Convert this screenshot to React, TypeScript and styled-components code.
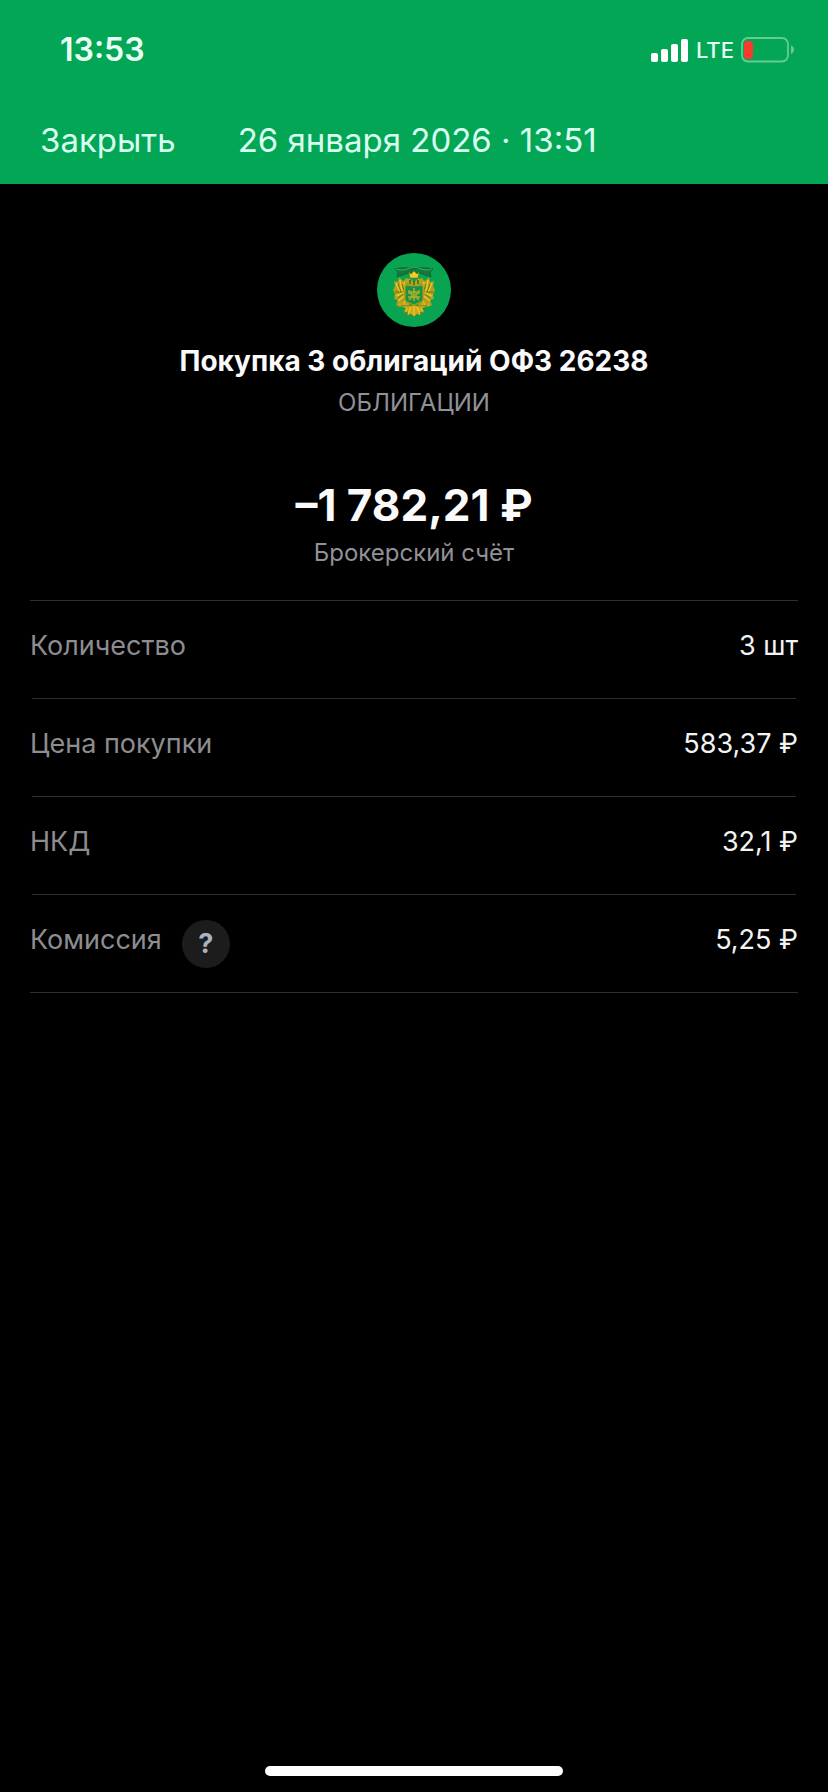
import React from 'react';
import styled, { createGlobalStyle } from 'styled-components';

const GlobalStyle = createGlobalStyle`
  *, *::before, *::after { box-sizing: border-box; }
  body {
    margin: 0;
    background: #000;
    color: #fafafb;
    font-family: Inter, 'Liberation Sans', sans-serif;
  }
`;

const Page = styled.div`
  display: flex;
  flex-direction: column;
  min-height: 100vh;
  background: #000;
`;

const Header = styled.header`
  background: #03a654;
  color: #d9fff0;
  padding: 32px 34px 22px 40px;
`;

const StatusBar = styled.div`
  display: flex;
  align-items: center;
  justify-content: space-between;
  height: 36px;
  padding-left: 20px;
`;

const Clock = styled.time`
  font-size: 32px;
  line-height: 36px;
  font-weight: 600;
  color: #eafff6;
`;

const Indicators = styled.div`
  display: flex;
  align-items: center;
  gap: 7px;
`;

const Network = styled.span`
  font-size: 22px;
  line-height: 36px;
  font-weight: 500;
  color: #e2fff2;
`;

const NavBar = styled.div`
  display: flex;
  align-items: center;
  gap: 62px;
  margin-top: 50px;
  font-size: 33px;
  line-height: 44px;
`;

const CloseButton = styled.button`
  border: 0;
  padding: 0;
  background: none;
  color: inherit;
  font: inherit;
  cursor: pointer;
`;

const NavTitle = styled.h1`
  margin: 0;
  font: inherit;
`;

const Content = styled.main`
  flex: 1;
  padding: 69px 30px 0;
`;

const Summary = styled.section`
  display: flex;
  flex-direction: column;
  align-items: center;
  text-align: center;
`;

const Title = styled.h2`
  margin: 16px 0 0;
  font-size: 28px;
  line-height: 36px;
  font-weight: 700;
`;

const Caption = styled.p<{ $gap: number }>`
  margin: ${({ $gap }) => $gap}px 0 0;
  font-size: 24px;
  line-height: 32px;
  color: #919197;
`;

const Amount = styled.p`
  margin: 60px 0 0;
  font-size: 44px;
  line-height: 52px;
  font-weight: 700;
`;

const Details = styled.dl`
  margin: 31px 0 0;
  border: solid #2f2f30;
  border-width: 1px 0;
`;

const Row = styled.div`
  display: flex;
  justify-content: space-between;
  height: 98px;
  padding-top: 28px;
  font-size: 27px;
  line-height: 36px;

  &:first-child {
    height: 97px;
    padding-top: 27px;
  }

  & + & {
    background: linear-gradient(#2f2f30, #2f2f30) top center / calc(100% - 4px) 1px no-repeat;
  }
`;

const Label = styled.dt`
  display: flex;
  gap: 20px;
  color: #8d8d90;
`;

const Value = styled.dd`
  margin: 0;
  color: #f3f3f3;
`;

const HelpButton = styled.button`
  width: 48px;
  height: 48px;
  margin-top: -2px;
  padding: 0;
  border: 0;
  border-radius: 50%;
  background: #1c1c1c;
  color: #a9b2bd;
  font-family: inherit;
  font-size: 27px;
  line-height: 48px;
  font-weight: 700;
  cursor: pointer;
`;

const Footer = styled.footer`
  display: flex;
  justify-content: center;
  padding: 16px 0;
`;

const HomeIndicator = styled.div`
  width: 36%;
  height: 10px;
  border-radius: 5px;
  background: #fff;
`;

const SignalIcon = () => (
  <svg width="38" height="24" viewBox="0 0 38 24" fill="#fff" aria-hidden="true">
    <rect x="0" y="15" width="7" height="9" rx="2" />
    <rect x="10" y="11" width="7" height="13" rx="2" />
    <rect x="20" y="6" width="7" height="18" rx="2" />
    <rect x="30" y="1" width="7" height="23" rx="2" />
  </svg>
);

const BatteryIcon = () => (
  <svg width="53" height="26" viewBox="0 0 53 26" aria-hidden="true">
    <rect x="1" y="1" width="46" height="23.5" rx="6" fill="none" stroke="#65cb94" strokeWidth="1.8" />
    <path d="M50 8.500c2 .8 3 2.300 3 4.200s-1 3.400-3 4.200z" fill="#65cb94" />
    <rect x="3" y="4" width="9" height="18" rx="3.500" fill="#f83b2d" />
  </svg>
);

const CrestWing = () => (
  <g>
    <path
      d="M30 30l-1-4-3 2-4-4-1 5-4-1 1 5-2 4 2 4-1 5 4 1-2 5 4 2 4-3 4 5 3-2-3-5 1-8z"
      fill="#b39f1c"
    />
    <path
      d="M19 30l4 9 M23 27l2 11 M27 29l1 8 M19 43l7-3 M21 48l6-5 M25 53l4-6"
      stroke="#ecc52a"
      strokeWidth="1.600"
      fill="none"
    />
    <path d="M21 31l3 8 M25 31l2 6 M18 39l7 0 M21 45l5-4" stroke="#3c6b16" strokeWidth="0.700" fill="none" />
    <path d="M26 49l4 4 M22 51l6 3" stroke="#d8a91c" strokeWidth="2" />
  </g>
);

const Crest = () => (
  <svg width="74" height="74" viewBox="0 0 74 74" role="img" aria-label="ОФЗ">
    <circle cx="37" cy="37" r="37" fill="#08a452" />
    <path
      d="M18 16c7-2 12-1 19-1 7 0 12-1 19 1l-3 3 1 5-6-2c-4-2-7-2-11-2s-7 0-11 2l-6 2 1-5z"
      fill="#13793d"
      stroke="#0c5f30"
      strokeWidth="0.800"
    />
    <path d="M19 16c5 2 8 1 11 0 4-2 10-2 14 0 3 1 6 2 11 0" stroke="#35ab68" strokeWidth="1.200" fill="none" />
    <CrestWing />
    <g transform="matrix(-1 0 0 1 74 0)">
      <CrestWing />
    </g>
    <path d="M32 19l2 2 3-3 3 3 2-2-1 6h-8z" fill="#f0cc2a" stroke="#6e7a17" strokeWidth="0.600" />
    <path d="M28 25l5 1 4 3 4-3 5-1-1 4-3 3h-10l-3-3z" fill="#b7a51e" />
    <path d="M33 27v4 M41 27v4 M37 28v5" stroke="#24591c" strokeWidth="1.200" />
    <path
      d="M37 52l-6 1-7-1 5 4-3 4 5-1-1 4 4-2 3 3 3-3 4 2-1-4 5 1-3-4 5-4-7 1z"
      fill="#cca91e"
      stroke="#5c7b18"
      strokeWidth="0.600"
    />
    <path d="M37 53v9 M34 54l-3 7 M40 54l3 7 M30 55l-2 3 M44 55l2 3" stroke="#f3c824" strokeWidth="1.200" />
    <path
      d="M28 32c6 1 12 1 18 0v15c0 2-4 3-9 5-5-2-9-3-9-5z"
      fill="#159448"
      stroke="#a69c1c"
      strokeWidth="1.300"
    />
    <g stroke="#b5ad28" fill="none" strokeWidth="1.500">
      <path d="M37 35v13 M32 37v3l3 1v3l-3 3 M42 37v3l-3 1v3l3 3" />
      <path d="M31 44h12 M33 39h8" />
    </g>
  </svg>
);

const operations: { label: string; value: string; help?: boolean }[] = [
  { label: 'Количество', value: '3 шт' },
  { label: 'Цена покупки', value: '583,37 ₽' },
  { label: 'НКД', value: '32,1 ₽' },
  { label: 'Комиссия', value: '5,25 ₽', help: true },
];

export default function App() {
  return (
    <Page>
      <GlobalStyle />
      <Header>
        <StatusBar>
          <Clock>13:53</Clock>
          <Indicators>
            <SignalIcon />
            <Network>LTE</Network>
            <BatteryIcon />
          </Indicators>
        </StatusBar>
        <NavBar>
          <CloseButton type="button">Закрыть</CloseButton>
          <NavTitle>26 января 2026 · 13:51</NavTitle>
        </NavBar>
      </Header>
      <Content>
        <Summary>
          <Crest />
          <Title>Покупка 3 облигаций ОФЗ 26238</Title>
          <Caption $gap={8}>ОБЛИГАЦИИ</Caption>
          <Amount>–1{'\u00a0'}782,21{'\u00a0'}₽</Amount>
          <Caption $gap={6}>Брокерский счёт</Caption>
        </Summary>
        <Details>
          {operations.map(({ label, value, help }) => (
            <Row key={label}>
              <Label>
                {label}
                {help && (
                  <HelpButton type="button" aria-label="Подробнее о комиссии">
                    ?
                  </HelpButton>
                )}
              </Label>
              <Value>{value}</Value>
            </Row>
          ))}
        </Details>
      </Content>
      <Footer>
        <HomeIndicator />
      </Footer>
    </Page>
  );
}
